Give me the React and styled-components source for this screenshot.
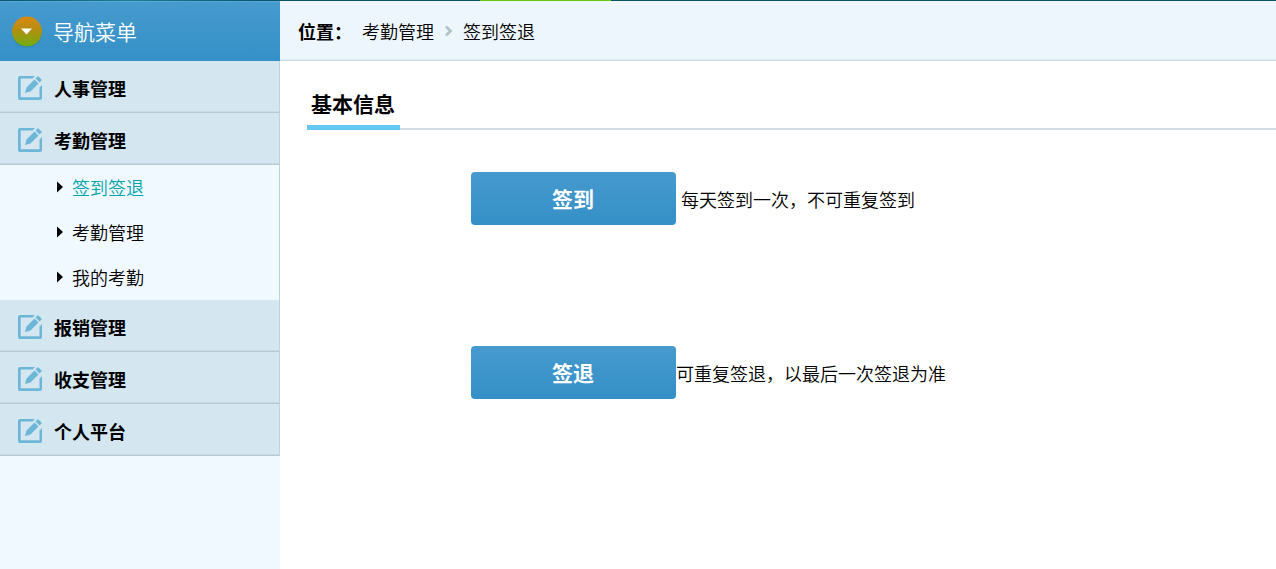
import styled, { createGlobalStyle } from 'styled-components';

const GlobalStyle = createGlobalStyle`
  * {
    box-sizing: border-box;
  }
  body {
    margin: 0;
    background: #fff;
    color: #000;
    font-family: "Noto Sans CJK SC", sans-serif;
    font-size: 18px;
    font-weight: 350;
    line-height: 26px;
  }
  a {
    color: inherit;
    text-decoration: none;
  }
  button {
    border: 0;
    font-family: inherit;
    cursor: pointer;
  }
`;

const Page = styled.div`
  display: flex;
  flex-direction: column;
  min-height: 100vh;
`;

const TopStrip = styled.div`
  height: 1px;
  background: linear-gradient(to right, #0a5466, #1b7f8c 130px, #0a5466 260px);
`;

const ActiveTab = styled.div`
  width: 131px;
  height: 1px;
  margin-left: 480px;
  background: #66c90b;
`;

const Body = styled.div`
  display: flex;
  flex: 1;
`;

const Sidebar = styled.aside`
  flex: none;
  width: 280px;
  background: #f0f9ff;
`;

const SidebarTitle = styled.div`
  display: flex;
  align-items: center;
  gap: 10px;
  height: 60px;
  padding: 0 0 2px 11px;
  border-top: 1px solid #57a9db;
  background: linear-gradient(#469ace, #3490c7);
  color: #fff;
  font-size: 21px;
`;

const Menu = styled.nav`
  border-right: 1px solid #b7d5df;
`;

const MenuHead = styled.button`
  display: flex;
  align-items: center;
  gap: 12px;
  width: 100%;
  height: 52px;
  padding: 2px 0 0 18px;
  border-bottom: 1px solid #b6cad2;
  background: #d4e7f0;
  box-shadow: inset 0 -1px #c8dbe4;
  color: #000;
  font-size: 18px;
  font-weight: bold;
`;

const SubMenu = styled.ul`
  margin: 0;
  padding: 0;
  list-style: none;
`;

const SubItem = styled.li`
  display: flex;
  align-items: center;
  gap: 8px;
  height: 45px;
  padding: 0 0 2px 56px;
  color: ${(props) => (props.$active ? '#00a4ac' : '#000')};
`;

const Main = styled.main`
  flex: 1;
  min-width: 0;
`;

const Place = styled.div`
  display: flex;
  align-items: center;
  height: 60px;
  padding-left: 18px;
  border-bottom: 1px solid #d0dee5;
  background: #edf6fc;
  box-shadow: inset 0 -1px #e2ecf2;
`;

const PlaceLabel = styled.span`
  width: 64px;
  font-weight: bold;
`;

const Crumbs = styled.div`
  display: flex;
  align-items: center;
  gap: 10px;
`;

const FormTitle = styled.div`
  display: flex;
  align-items: flex-end;
  height: 69px;
  margin-left: 27px;
  background: linear-gradient(#d0dee5, #d0dee5) bottom / 100% 2px no-repeat;
`;

const TitleText = styled.h2`
  margin: 0;
  padding: 0 5px 6px 4px;
  border-bottom: 5px solid #66c9f3;
  font-size: 21px;
  line-height: 32px;
`;

const Actions = styled.div`
  display: flex;
  flex-direction: column;
  gap: 121px;
  padding: 42px 0 42px 191px;
`;

const ActionRow = styled.div`
  display: flex;
  align-items: center;
  gap: ${(props) => (props.$spaced ? '5px' : '0')};
`;

const ActionButton = styled.button`
  width: 205px;
  height: 53px;
  padding: 0 1px 2px 0;
  border-radius: 4px;
  background: linear-gradient(#469ace, #3490c7);
  color: #fff;
  font-size: 21px;
  font-weight: bold;
`;

const groups = [
  { name: '人事管理' },
  { name: '考勤管理', items: ['签到签退', '考勤管理', '我的考勤'] },
  { name: '报销管理' },
  { name: '收支管理' },
  { name: '个人平台' },
];

const current = '签到签退';

const RoundArrow = () => (
  <svg width="32" height="34" viewBox="0 0 32 34">
    <defs>
      <linearGradient id="ball" x1="0" y1="0" x2="0" y2="1">
        <stop offset="0" stopColor="#d98a12" />
        <stop offset="0.4" stopColor="#b98c10" />
        <stop offset="1" stopColor="#6fae10" />
      </linearGradient>
    </defs>
    <circle cx="16" cy="18.500" r="15" fill="#2f7496" opacity="0.6" />
    <circle cx="16" cy="17.500" r="15" fill="url(#ball)" />
    <path d="M10 14.500h11l-5.500 6z" fill="#fff" />
  </svg>
);

const EditIcon = () => (
  <svg width="24" height="24" viewBox="0 0 24 24" fill="#6cb6d8">
    <path d="M2 0H17L14.500 2.500H2.700V21.300H21.500V11.500L24 9V22Q24 24 22 24H2Q0 24 0 22V2Q0 0 2 0Z" />
    <path d="M7 17L8.500 11.500L16.500 3.500L20.500 7.500L12.500 15.500Z" />
    <path d="M17.500 2.500L19.500 0.500Q20 0 20.500 0.500L23.500 3.500Q24 4 23.500 4.500L21.500 6.500Z" />
  </svg>
);

const ItemArrow = () => (
  <svg width="8" height="12" viewBox="0 0 8 12">
    <path d="M1 0.500L7 6L1 11.500Z" fill="#000" />
  </svg>
);

const CrumbArrow = () => (
  <svg width="9" height="12" viewBox="0 0 9 12">
    <path d="M2 1.500L6.500 6L2 10.500" fill="none" stroke="#b2c3cb" strokeWidth="2.800" />
  </svg>
);

export default function App() {
  return (
    <Page>
      <GlobalStyle />
      <TopStrip>
        <ActiveTab />
      </TopStrip>
      <Body>
        <Sidebar>
          <SidebarTitle>
            <RoundArrow />
            导航菜单
          </SidebarTitle>
          <Menu>
            {groups.map((group) => (
              <div key={group.name}>
                <MenuHead type="button">
                  <EditIcon />
                  {group.name}
                </MenuHead>
                {group.items && (
                  <SubMenu>
                    {group.items.map((item) => (
                      <SubItem key={item} $active={item === current}>
                        <ItemArrow />
                        <a href="#">{item}</a>
                      </SubItem>
                    ))}
                  </SubMenu>
                )}
              </div>
            ))}
          </Menu>
        </Sidebar>
        <Main>
          <Place>
            <PlaceLabel>位置：</PlaceLabel>
            <Crumbs>
              <a href="#">考勤管理</a>
              <CrumbArrow />
              <a href="#">{current}</a>
            </Crumbs>
          </Place>
          <FormTitle>
            <TitleText>基本信息</TitleText>
          </FormTitle>
          <Actions>
            <ActionRow $spaced>
              <ActionButton type="button">签到</ActionButton>
              <span>每天签到一次，不可重复签到</span>
            </ActionRow>
            <ActionRow>
              <ActionButton type="button">签退</ActionButton>
              <span>可重复签退，以最后一次签退为准</span>
            </ActionRow>
          </Actions>
        </Main>
      </Body>
    </Page>
  );
}
